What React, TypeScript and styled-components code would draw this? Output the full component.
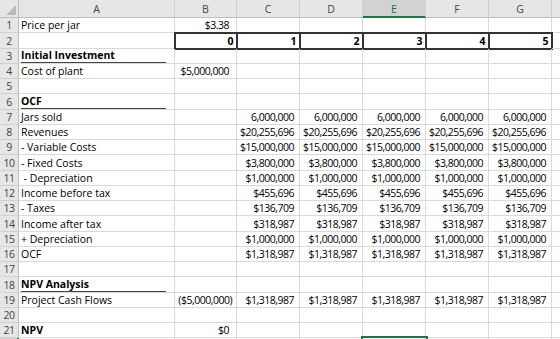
import React from 'react';
import styled, { createGlobalStyle, css } from 'styled-components';

const GlobalStyle = createGlobalStyle`
  html, body {
    margin: 0;
    padding: 0;
    background: #ffffff;
    overflow: hidden;
  }
  body {
    font-family: "Open Sans", "Noto Sans", sans-serif;
  }
`;

const COLS = '19px 156px 62px 63px 63px 63px 63px 63px 63px';
const ROW_H = 15.25;
const HEAD_H = 18;
const GRID = '#dadada';
const HEAD_BG = '#e6e6e6';
const HEAD_LINE = '#d0d0d0';
const GREEN = '#217346';

const Sheet = styled.div`
  width: 560px;
  height: 339px;
  overflow: hidden;
  display: flex;
  flex-direction: column;
  background: #fff;
`;

const Row = styled.div<{ $h: number }>`
  display: grid;
  grid-template-columns: ${COLS};
  height: ${(p) => p.$h}px;
  flex: none;
`;

const ColHead = styled.div<{ $sel?: boolean }>`
  background: ${HEAD_BG};
  border-right: 1px solid ${HEAD_LINE};
  border-bottom: 1px solid #bdbdbd;
  display: flex;
  align-items: center;
  justify-content: center;
  color: #444;
  font-size: 10.5px;
  padding-top: 1px;
  ${(p) =>
    p.$sel &&
    css`
      background: #d2d2d2;
      border-bottom: 2px solid ${GREEN};
      color: ${GREEN};
    `}
`;

const Corner = styled.div`
  background: ${HEAD_BG};
  border-right: 1px solid #bdbdbd;
  border-bottom: 1px solid #bdbdbd;
  display: flex;
  align-items: flex-end;
  justify-content: flex-end;
  padding: 0 2px 2px 0;
`;

const RowHead = styled.div<{ $sel?: boolean }>`
  background: ${HEAD_BG};
  border-right: 1px solid #bdbdbd;
  border-bottom: 1px solid ${HEAD_LINE};
  display: flex;
  align-items: flex-end;
  justify-content: center;
  color: #444;
  font-size: 10.5px;
  line-height: 14px;
  letter-spacing: -0.4px;
  ${(p) =>
    p.$sel &&
    css`
      background: #d2d2d2;
      border-right: 2px solid ${GREEN};
    `}
`;

const Cell = styled.div<{
  $right?: boolean;
  $pr?: number;
  $bold?: boolean;
  $boxed?: boolean;
  $sel?: boolean;
}>`
  border-right: 1px solid ${GRID};
  border-bottom: 1px solid ${GRID};
  display: flex;
  align-items: flex-end;
  justify-content: ${(p) => (p.$right ? 'flex-end' : 'flex-start')};
  padding: 0 ${(p) => p.$pr ?? 2}px 0 2px;
  font-size: 10.5px;
  line-height: 14px;
  white-space: nowrap;
  color: #000;
  font-weight: ${(p) => (p.$bold ? 700 : 400)};
  letter-spacing: ${(p) => (p.$right ? '-0.5px' : '0')};
  ${(p) =>
    p.$boxed &&
    css`
      outline: 2px solid #333;
      outline-offset: -1px;
    `}
  ${(p) =>
    p.$sel &&
    css`
      outline: 2px solid ${GREEN};
      outline-offset: 0px;
    `}
`;

const Heading = styled.span`
  flex: 1;
  font-weight: 700;
  line-height: 13px;
  border-bottom: 1px solid #444;
  margin-right: 6px;
`;

type RowDef = {
  a?: string;
  head?: boolean;
  bold?: boolean;
  b?: string;
  neg?: boolean;
  rest?: string[];
  boxed?: boolean;
};

const five = (v: string) => [v, v, v, v, v];

const rows: RowDef[] = [
  { a: 'Price per jar', b: '$3.38' },
  { b: '0', rest: ['1', '2', '3', '4', '5'], boxed: true },
  { a: 'Initial Investment', head: true },
  { a: 'Cost of plant', b: '$5,000,000' },
  {},
  { a: 'OCF', head: true },
  { a: 'Jars sold', rest: five('6,000,000') },
  { a: 'Revenues', rest: five('$20,255,696') },
  { a: '- Variable Costs', rest: five('$15,000,000') },
  { a: '- Fixed Costs', rest: five('$3,800,000') },
  { a: '\u00a0- Depreciation', rest: five('$1,000,000') },
  { a: 'Income before tax', rest: five('$455,696') },
  { a: '- Taxes', rest: five('$136,709') },
  { a: 'Income after tax', rest: five('$318,987') },
  { a: '+ Depreciation', rest: five('$1,000,000') },
  { a: 'OCF', rest: five('$1,318,987') },
  {},
  { a: 'NPV Analysis', head: true },
  { a: 'Project Cash Flows', b: '($5,000,000)', neg: true, rest: five('$1,318,987') },
  {},
  { a: 'NPV', bold: true, b: '$0' },
];

const letters = ['A', 'B', 'C', 'D', 'E', 'F', 'G', ''];

export default function App() {
  return (
    <>
      <GlobalStyle />
      <Sheet>
        <Row $h={HEAD_H}>
          <Corner>
            <svg width="10" height="10" viewBox="0 0 10 10">
              <polygon points="10,0 10,10 0,10" fill="#b9b9b9" />
            </svg>
          </Corner>
          {letters.map((l, i) => (
            <ColHead key={i} $sel={l === 'E'}>
              {l}
            </ColHead>
          ))}
        </Row>
        {rows.map((r, i) => (
          <Row key={i} $h={ROW_H}>
            <RowHead>{i + 1}</RowHead>
            <Cell $bold={r.bold}>
              {r.head ? <Heading>{r.a}</Heading> : r.a}
            </Cell>
            <Cell
              $right
              $pr={r.boxed ? 3 : r.neg ? 4 : 7}
              $bold={r.boxed}
              $boxed={r.boxed}
            >
              {r.b}
            </Cell>
            {[0, 1, 2, 3, 4].map((k) => (
              <Cell
                key={k}
                $right
                $pr={r.boxed ? 3 : 5}
                $bold={r.boxed}
                $boxed={r.boxed}
              >
                {r.rest ? r.rest[k] : ''}
              </Cell>
            ))}
            <Cell />
          </Row>
        ))}
        <Row $h={ROW_H}>
          <RowHead $sel />
          <Cell />
          <Cell />
          <Cell />
          <Cell />
          <Cell $sel />
          <Cell />
          <Cell />
          <Cell />
        </Row>
      </Sheet>
    </>
  );
}
